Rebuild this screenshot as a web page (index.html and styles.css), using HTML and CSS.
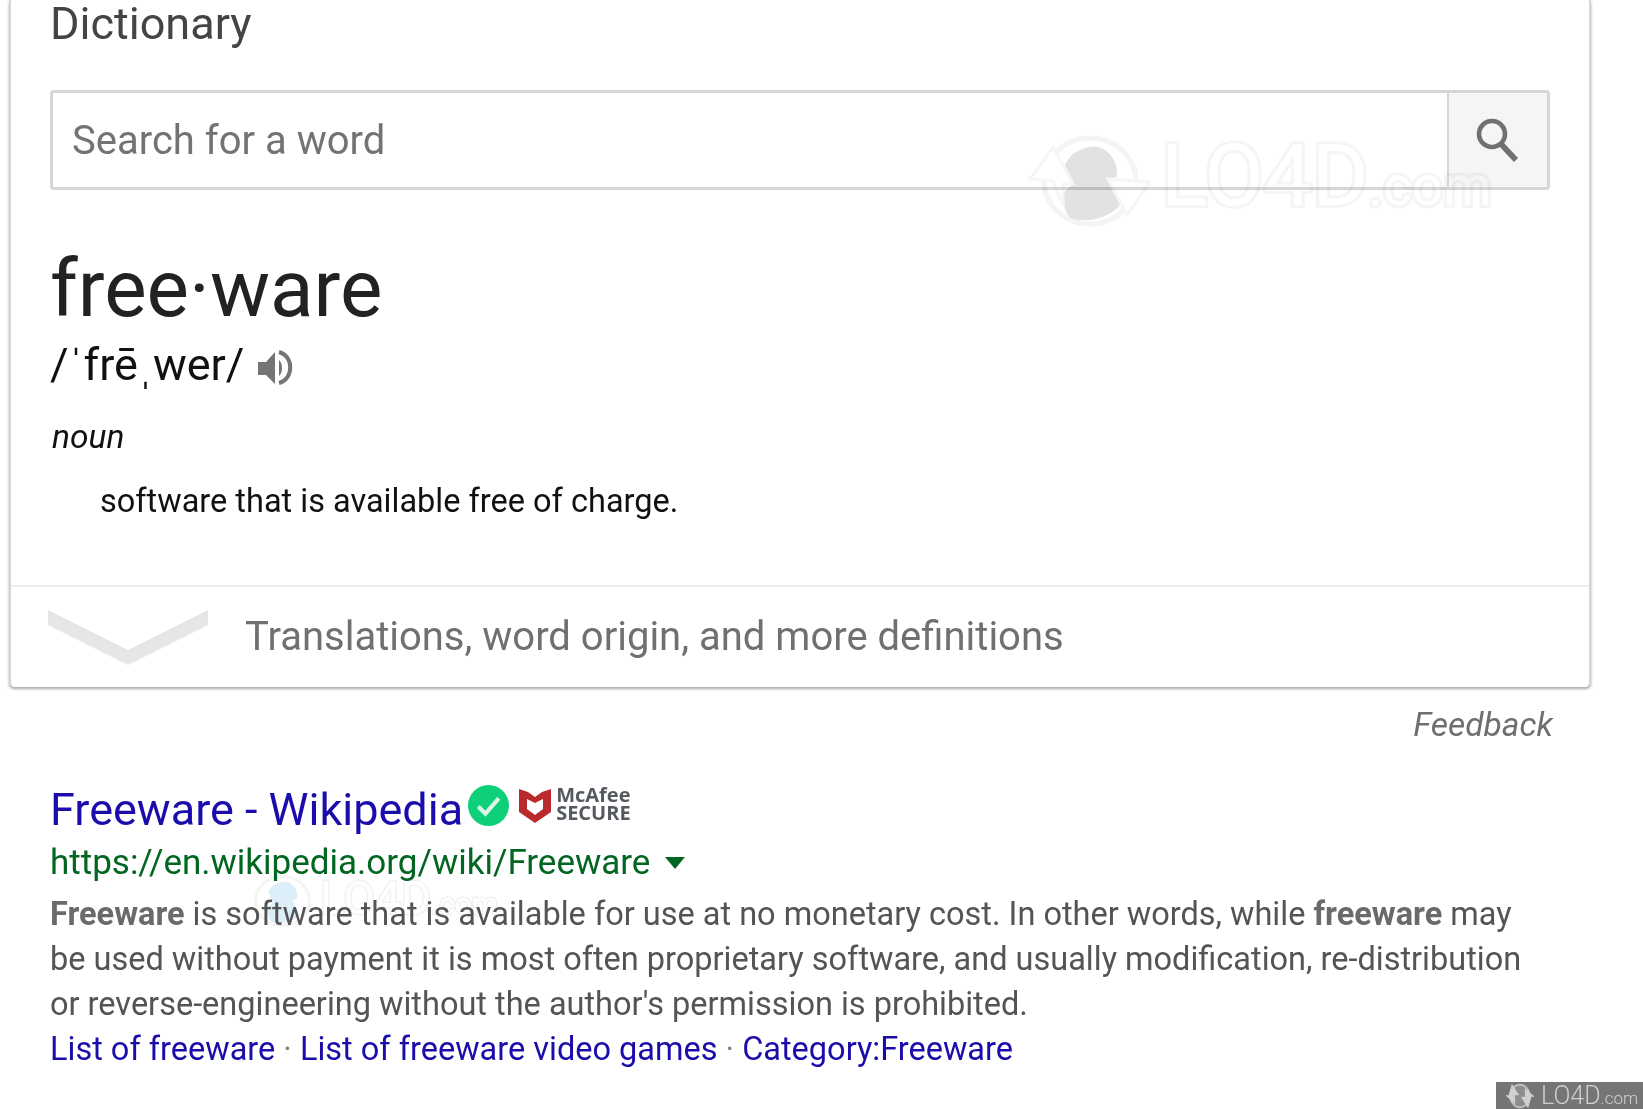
FILE: index.html
```html
<!DOCTYPE html>
<html lang="en">
<head>
<meta charset="utf-8">
<title>freeware</title>
<link rel="stylesheet" href="styles.css">
</head>
<body>
<div class="mark mark-small"><svg class="mark-logo" viewBox="0 0 125 92" aria-hidden="true"><ellipse cx="65" cy="46" rx="48" ry="44" fill="none" stroke="#f4f4f4" stroke-width="5"/><path d="M65 12 C80 8 94 25 92 42 L83 44 L95 70 C85 82 65 88 48 84 C40 82 38 65 38 58 L48 49 L40 30 C45 18 55 14 65 12 Z" fill="#dceef7"/></svg><span class="mark-text">LO4D<small>.com</small></span></div>
<main class="page">
  <section class="card">
    <div class="card-body">
      <h2 class="card-title">Dictionary</h2>
      <div class="search">
        <div class="search-input">Search for a word</div>
        <div class="search-button">
          <svg class="search-icon" viewBox="0 0 46 46" aria-hidden="true"><circle cx="17" cy="17" r="13" fill="none" stroke="#707070" stroke-width="4.6"/><path d="M26 27 L41 43" fill="none" stroke="#707070" stroke-width="5.6"/></svg>
        </div>
      </div>
      <h1 class="headword">free·ware</h1>
      <div class="phonetic">
        <span>/ˈfrēˌwer/</span>
        <svg class="speaker" viewBox="0 0 35 35" aria-hidden="true"><path d="M0 12 H8 L17 2 V34 L8 25 H0 Z" fill="#757575"/><path d="M21 10 C25 13 25 23 21 26 Z" fill="#757575"/><path d="M21 2 C36 6 36 29 21 33" fill="none" stroke="#757575" stroke-width="4"/></svg>
      </div>
      <div class="pos">noun</div>
      <p class="definition">software that is available free of charge.</p>
    </div>
    <div class="more">
      <svg class="chevron" viewBox="0 0 160 56" aria-hidden="true"><path d="M0 0 L80 40 L160 0 V15 L80 55 L0 15 Z" fill="#e6e6e6"/></svg>
      <span class="more-text">Translations, word origin, and more definitions</span>
    </div>
  </section>
  <div class="feedback-row"><span class="feedback">Feedback</span></div>
  <article class="result">
    <div class="result-title">
      <a class="title-link">Freeware - Wikipedia</a>
      <svg class="check" viewBox="0 0 40 40" aria-hidden="true"><circle cx="20" cy="20" r="20" fill="#0fd07a"/><path d="M10 21 L17 28 L30 13" fill="none" stroke="#d8f7e6" stroke-width="4"/></svg>
      <svg class="shield" viewBox="0 0 32 35" aria-hidden="true"><path d="M0 1 L9 4 L16 9 L23 4 L32 1 V24 L16 35 L0 24 Z" fill="#b92a2c"/><path d="M8 11 L16 15 L24 11 V21 L16 27 L8 21 Z" fill="#fff"/></svg>
      <span class="secure"><span>McAfee</span><span>SECURE</span></span>
    </div>
    <div class="url"><span>https://en.wikipedia.org/wiki/Freeware</span><i class="url-arrow"></i></div>
    <p class="snippet"><b>Freeware</b> is software that is available for use at no monetary cost. In other words, while <b>freeware</b> may<br>be used without payment it is most often proprietary software, and usually modification, re-distribution<br>or reverse-engineering without the author's permission is prohibited.</p>
    <div class="sitelinks"><a>List of freeware</a><span class="dot"> · </span><a>List of freeware video games</a><span class="dot"> · </span><a>Category:Freeware</a></div>
  </article>
</main>
<div class="mark mark-large"><svg class="mark-logo" viewBox="0 0 125 92" aria-hidden="true"><ellipse cx="65" cy="46" rx="46" ry="43" fill="none" stroke="#f4f4f4" stroke-width="5"/><path d="M65 12 C80 8 94 25 92 42 L83 44 L95 70 C85 82 65 88 48 84 C40 82 38 65 38 58 L48 49 L40 30 C45 18 55 14 65 12 Z" fill="#e2e2e2"/><path d="M28 12 L48 49 H38 V70 L28 46 L5 44 Z" fill="#fff" stroke="#f6f6f6" stroke-width="3"/><path d="M83 44 L125 47 L102 80 Z" fill="#fff" stroke="#f6f6f6" stroke-width="3"/></svg><span class="mark-text">LO4D<small>.com</small></span></div>
<div class="corner"><svg class="corner-logo" viewBox="0 0 40 32" aria-hidden="true"><ellipse cx="20" cy="16" rx="12" ry="14" fill="#8d8d8d" stroke="#c4c4c4" stroke-width="2"/><path d="M10 1 L19 15 H14 V26 L2 15 H6 Z" fill="#d0d0d0"/><path d="M30 31 L21 17 H26 V6 L38 17 H34 Z" fill="#d0d0d0"/></svg><span>LO4D<small>.com</small></span></div>
</body>
</html>
```
FILE: styles.css
```css
* { box-sizing: border-box; }
html, body { margin: 0; height: 100%; }
body { width: 1643px; height: 1109px; overflow: hidden; background: #fff; font-family: Roboto, "Liberation Sans", sans-serif; position: relative; }
.page { position: relative; z-index: 1; padding-left: 9px; width: 1591px; }
.card { width: 1582px; height: 687px; background: #fff; border: solid #d6d6d6; border-width: 0 2px; border-radius: 0 0 5px 5px; box-shadow: 0 2px 3px rgba(0,0,0,.35); display: flex; flex-direction: column; }
.card-body { height: 587px; padding: 0 38px 0 39px; border-bottom: 2px solid #ebebeb; }
.card-title { margin: 0; font-size: 45px; font-weight: 400; line-height: 48px; color: #444; }
.search { display: flex; height: 100px; margin-top: 42px; width: 1500px; border: 3px solid #d6d6d6; border-radius: 4px; }
.search-input { flex: 1; padding-left: 19px; font-size: 40px; line-height: 96px; color: #737373; }
.search-button { width: 100px; background: #f5f5f5; border-left: 2px solid #d6d6d6; display: flex; align-items: center; justify-content: center; }
.search-icon { width: 46px; height: 46px; }
.headword { margin: 57px 0 0; font-size: 80px; font-weight: 400; line-height: 84px; color: #222; }
.phonetic { display: flex; align-items: center; gap: 14px; height: 50px; margin-top: 8px; font-size: 45px; color: #111; }
.speaker { width: 35px; height: 35px; margin-top: 6px; }
.pos { margin-top: 26px; padding-left: 2px; font-size: 33.5px; line-height: 44px; font-style: italic; color: #111; }
.definition { margin: 20px 0 0 50px; font-size: 32.5px; line-height: 44px; color: #111; }
.more { display: flex; align-items: center; flex: 1; padding-left: 37px; gap: 37px; font-size: 40px; color: #707070; }
.more-text { margin-bottom: 2px; }
.chevron { width: 160px; height: 56px; margin-top: 2px; }
.feedback-row { width: 1544px; margin-top: 18px; text-align: right; height: 40px; }
.feedback { font-size: 33.5px; line-height: 40px; font-style: italic; color: #6f6f6f; }
.result { margin: 37px 0 0 41px; }
.result-title { display: flex; align-items: flex-start; height: 55px; }
.title-link { font-size: 45px; line-height: 56px; color: #1a0dab; }
.check { width: 41px; height: 41px; margin: 3px 0 0 5px; }
.shield { width: 32px; height: 35px; margin: 6px 0 0 10px; filter: blur(.4px); }
.secure { display: flex; flex-direction: column; margin: 4px 0 0 5px; font-family: "Open Sans", sans-serif; font-weight: 700; font-size: 20px; line-height: 18px; color: #555a60; filter: blur(.4px); }
.url { display: flex; align-items: center; height: 51px; font-size: 35px; line-height: 50px; color: #006621; }
.url-arrow { width: 0; height: 0; margin: 0 0 0 15px; border: solid transparent; border-width: 12px 10px 0; border-top-color: #006621; }
.snippet { margin: 4px 0 0; font-size: 32.5px; line-height: 45px; color: #545454; }
.snippet b { font-weight: 700; color: #6a6a6a; }
.sitelinks { margin-top: 0; font-size: 32.5px; line-height: 45px; color: #808080; }
.sitelinks a { color: #1a0dab; }
.mark { position: absolute; display: flex; align-items: center; }
.mark-large { z-index: 2; left: 1025px; top: 130px; gap: 11px; mix-blend-mode: multiply; }
.mark-large .mark-logo { width: 125px; height: 92px; }
.mark-large .mark-text { font-size: 86px; line-height: 92px; color: #fff; -webkit-text-stroke: 6px #f5f5f5; paint-order: stroke fill; }
.mark-large small { font-size: 55px; }
.mark-small { z-index: 0; left: 246px; top: 872px; gap: 4px; }
.mark-small .mark-logo { width: 70px; height: 52px; }
.mark-small .mark-text { font-size: 46px; line-height: 52px; color: #fff; -webkit-text-stroke: 3px #f2f2f2; paint-order: stroke fill; }
.mark-small small { font-size: 30px; }
.corner { z-index: 3; position: absolute; right: 0; bottom: 0; width: 147px; height: 27px; background: #757575; color: #cfcfcf; display: flex; align-items: center; gap: 4px; padding-left: 7px; font-size: 25px; font-weight: 300; }
.corner small { font-size: 17px; }
.corner-logo { width: 34px; height: 26px; }
```
